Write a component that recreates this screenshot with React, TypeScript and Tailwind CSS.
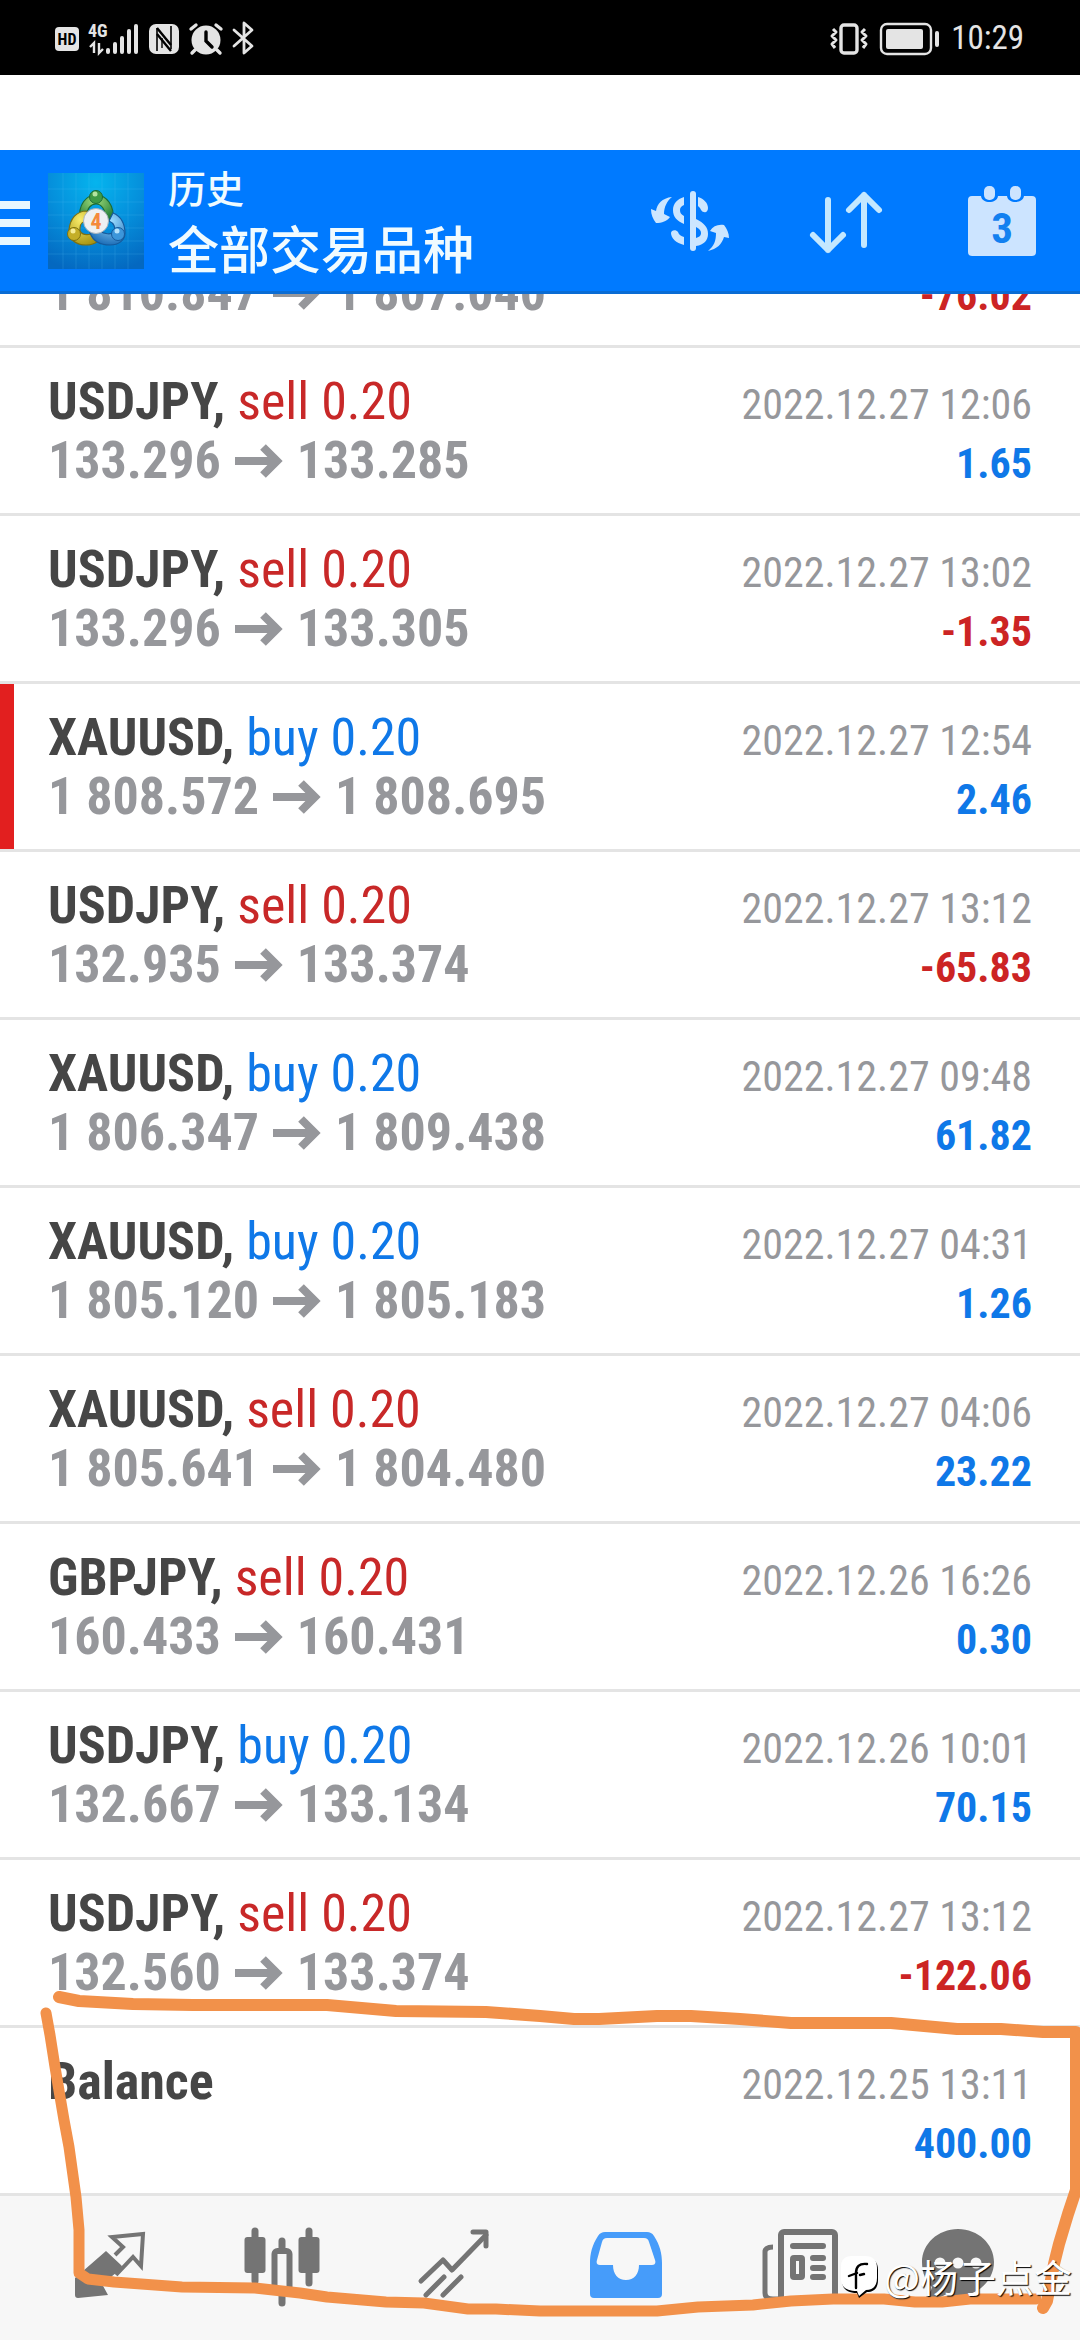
import React from 'react';
import clsx from 'clsx';

interface Deal {
  symbol?: string;
  side?: 'buy' | 'sell';
  volume?: string;
  open?: string;
  close?: string;
  time?: string;
  profit: string;
  marked?: boolean;
}

const deals: Deal[] = [
  { open: '1 810.847', close: '1 807.040', profit: '-76.02' },
  { symbol: 'USDJPY', side: 'sell', volume: '0.20', open: '133.296', close: '133.285', time: '2022.12.27 12:06', profit: '1.65' },
  { symbol: 'USDJPY', side: 'sell', volume: '0.20', open: '133.296', close: '133.305', time: '2022.12.27 13:02', profit: '-1.35' },
  { symbol: 'XAUUSD', side: 'buy', volume: '0.20', open: '1 808.572', close: '1 808.695', time: '2022.12.27 12:54', profit: '2.46', marked: true },
  { symbol: 'USDJPY', side: 'sell', volume: '0.20', open: '132.935', close: '133.374', time: '2022.12.27 13:12', profit: '-65.83' },
  { symbol: 'XAUUSD', side: 'buy', volume: '0.20', open: '1 806.347', close: '1 809.438', time: '2022.12.27 09:48', profit: '61.82' },
  { symbol: 'XAUUSD', side: 'buy', volume: '0.20', open: '1 805.120', close: '1 805.183', time: '2022.12.27 04:31', profit: '1.26' },
  { symbol: 'XAUUSD', side: 'sell', volume: '0.20', open: '1 805.641', close: '1 804.480', time: '2022.12.27 04:06', profit: '23.22' },
  { symbol: 'GBPJPY', side: 'sell', volume: '0.20', open: '160.433', close: '160.431', time: '2022.12.26 16:26', profit: '0.30' },
  { symbol: 'USDJPY', side: 'buy', volume: '0.20', open: '132.667', close: '133.134', time: '2022.12.26 10:01', profit: '70.15' },
  { symbol: 'USDJPY', side: 'sell', volume: '0.20', open: '132.560', close: '133.374', time: '2022.12.27 13:12', profit: '-122.06' },
  { symbol: 'Balance', time: '2022.12.25 13:11', profit: '400.00' },
];

const StatusBar = () => (
  <div className="flex h-[75px] shrink-0 items-center justify-between bg-black pr-[56px] pl-[54px] text-[#e4e4e4]">
    <div className="flex items-center gap-2">
      <svg width="26" height="36" viewBox="0 0 26 36">
        <rect x="1" y="7" width="24" height="24" rx="4" fill="currentColor" />
        <text x="13" y="25" textAnchor="middle" fontSize="16" fontWeight="700" fill="#000" className="font-['Roboto_Condensed',sans-serif]">HD</text>
      </svg>
      <svg width="52" height="36" viewBox="0 0 52 36" fill="currentColor">
        <text x="0" y="17" fontSize="18" fontWeight="700" className="font-['Roboto_Condensed',sans-serif]">4G</text>
        <path d="M2 27l4-4v10M11 23v10l4-4" fill="none" stroke="currentColor" strokeWidth="2.4" />
        <rect x="18" y="28" width="4" height="6" rx="2" />
        <rect x="25" y="22" width="4" height="12" rx="2" />
        <rect x="32" y="16" width="4" height="18" rx="2" />
        <rect x="39" y="9" width="4" height="25" rx="2" />
        <rect x="46" y="4" width="4" height="30" rx="2" />
      </svg>
      <svg width="32" height="36" viewBox="0 0 32 36">
        <rect x="1" y="4" width="30" height="30" rx="7" fill="currentColor" />
        <path d="M9 31V8M23 29V6" fill="none" stroke="#000" strokeWidth="1.6" />
        <path d="M9 8l14 17M9 14l14 17" fill="none" stroke="#000" strokeWidth="2.4" />
        <path d="M14 18v10" fill="none" stroke="#000" strokeWidth="1.4" />
      </svg>
      <svg width="36" height="36" viewBox="0 0 36 36">
        <circle cx="18" cy="20" r="14.5" fill="currentColor" />
        <path d="M3 9l5-4M33 9l-5-4M7 30l-3 3M29 30l3 3" stroke="currentColor" strokeWidth="3.4" strokeLinecap="round" />
        <path d="M18 12v9l6 6" fill="none" stroke="#000" strokeWidth="3.4" strokeLinecap="round" />
      </svg>
      <svg width="24" height="36" viewBox="0 0 24 36">
        <path d="M2 10l18 16-8 7V3l8 7L2 26" fill="none" stroke="currentColor" strokeWidth="2.8" strokeLinejoin="round" strokeLinecap="round" />
      </svg>
    </div>
    <div className="flex items-center gap-2.5">
      <svg width="40" height="36" viewBox="0 0 40 36" fill="none" stroke="currentColor">
        <rect x="12" y="5" width="16" height="28" rx="3" strokeWidth="3.4" />
        <path d="M4 9l3 3-4 4 4 4-4 4 3 4M36 9l-3 3 4 4-4 4 4 4-3 4" strokeWidth="3" strokeLinejoin="round" />
      </svg>
      <svg width="62" height="36" viewBox="0 0 62 36">
        <rect x="2" y="4" width="50" height="30" rx="6" fill="none" stroke="currentColor" strokeWidth="2.4" />
        <rect x="7" y="9" width="37" height="20" rx="2" fill="currentColor" />
        <rect x="56" y="11" width="4" height="16" rx="2" fill="currentColor" />
      </svg>
      <span className="font-['Roboto_Condensed',sans-serif] text-[33px]">10:29</span>
    </div>
  </div>
);

const AppLogo = () => (
  <svg width="96" height="96" viewBox="0 0 96 96" className="ml-[18px] shrink-0">
    <defs>
      <radialGradient id="sky" cx="50%" cy="10%" r="95%">
        <stop offset="0" stopColor="#05b4ee" />
        <stop offset="0.5" stopColor="#0590dc" />
        <stop offset="1" stopColor="#0468c0" />
      </radialGradient>
      <radialGradient id="green" cx="45%" cy="25%" r="75%">
        <stop offset="0" stopColor="#9fdc7c" />
        <stop offset="1" stopColor="#1f7a34" />
      </radialGradient>
      <radialGradient id="yellow" cx="40%" cy="25%" r="80%">
        <stop offset="0" stopColor="#f8ec6a" />
        <stop offset="1" stopColor="#a89412" />
      </radialGradient>
      <radialGradient id="blue" cx="60%" cy="25%" r="80%">
        <stop offset="0" stopColor="#9bdcff" />
        <stop offset="1" stopColor="#1668b4" />
      </radialGradient>
    </defs>
    <rect width="96" height="96" fill="url(#sky)" />
    <path d="M15 0v96M28 0v96M41 0v96M54 0v96M67 0v96M80 0v96M0 16h96M0 29h96M0 42h96M0 55h96M0 68h96M0 81h96" stroke="#5cc4f4" strokeOpacity="0.2" strokeWidth="1" />
    <path d="M32 46c-2-14 6-24 16-24s19 10 17 26l-8-2c1-10-4-15-9-15s-9 4-9 12z" fill="url(#green)" stroke="#1c6b35" strokeWidth="1.2" />
    <path d="M39 38c-11 0-17 8-18 19-1 10 8 15 17 15 5 0 8-1 11-3l-6-8c-7 2-12-1-11-6 0-4 3-7 8-7z" fill="url(#yellow)" stroke="#7c7012" strokeWidth="1.2" />
    <path d="M42 60c3 8 10 12 20 12 9 0 15-5 15-12 0-9-4-17-12-20l-4 8c5 2 7 7 5 11-3 3-10 2-14-1z" fill="url(#blue)" stroke="#165a9c" strokeWidth="1.2" />
    <circle cx="48" cy="24" r="6.5" fill="#3f9a45" stroke="#1c6b35" />
    <circle cx="26" cy="61" r="6.5" fill="#c4ae28" stroke="#7c7012" />
    <circle cx="70" cy="61" r="6.5" fill="#3c96da" stroke="#165a9c" />
    <circle cx="47" cy="21" r="2.5" fill="#b4e4a0" />
    <circle cx="25" cy="58" r="2.5" fill="#f6ec98" />
    <circle cx="69" cy="58" r="2.5" fill="#b4e2fc" />
    <circle cx="48" cy="48" r="12.5" fill="#eef0f2" stroke="#a9b4bd" />
    <text x="48" y="56" textAnchor="middle" fontSize="22" fontWeight="700" fill="#f58a3c" className="font-['Roboto_Condensed',sans-serif]">4</text>
  </svg>
);

const Header = () => (
  <header className="flex h-36 shrink-0 items-center border-b-3 border-[#0a6cd4] bg-[#007aff] text-[#f0fbff]">
    <button aria-label="Menu" className="flex w-[30px] shrink-0 flex-col gap-2.5 pt-1">
      <span className="h-2 bg-[#e8f7ff]" />
      <span className="h-2 bg-[#e8f7ff]" />
      <span className="h-2 bg-[#e8f7ff]" />
    </button>
    <AppLogo />
    <div className="ml-6 flex-1 pb-1 font-['Noto_Sans_CJK_SC',sans-serif] font-medium">
      <p className="text-[38px] leading-[56px]">历史</p>
      <h1 className="text-[51px] leading-[64px]">全部交易品种</h1>
    </div>
    <button aria-label="Currency" className="flex w-[156px] justify-center">
      <svg width="80" height="72" viewBox="0 0 80 72" fill="#cce6ff">
        <rect x="40" y="6" width="6" height="60" rx="3" />
        <path d="M34 12c-7 2-11 7-11 13 0 7 4 11 11 14v-8c-3-2-4-3-4-6 0-2 1-4 4-5z" />
        <path d="M48 12c6 2 10 6 10 11 0 3-2 5-4 4-2 0-3-2-4-4l-2-2z" />
        <path d="M46 34c8 4 12 8 12 15 0 6-4 11-12 12v-8c4-1 5-3 5-5s-1-4-5-6z" />
        <path d="M34 60c-8-2-13-7-13-12 0-3 5-4 7-1 1 3 3 4 6 5z" />
        <path d="M22 12c-10 1-15 7-16 14l-5-2c0 6 2 10 5 14 6 0 11-2 14-6l-6-3c0-7 3-13 8-17z" />
        <path d="M58 66c6-5 8-10 8-18l-6-2c3-5 8-7 14-6 3 4 5 8 5 13l-5-1c-2 7-7 12-16 14z" />
      </svg>
    </button>
    <button aria-label="Sort" className="flex w-[156px] justify-center">
      <svg width="80" height="72" viewBox="0 0 80 72" fill="none" stroke="#c4e8ff" strokeWidth="6" strokeLinecap="round" strokeLinejoin="round">
        <path d="M22 15v50M7 50l15 15 15-15M58 60V10M43 25l15-15 15 15" />
      </svg>
    </button>
    <button aria-label="Calendar" className="flex w-[156px] justify-center">
      <svg width="80" height="72" viewBox="0 0 80 72" fill="#cce4ff">
        <path d="M10 11h9c1 8 16 8 17 0h9c1 8 16 8 17 0h8a4 4 0 0 1 4 4v52a4 4 0 0 1-4 4H10a4 4 0 0 1-4-4V15a4 4 0 0 1 4-4z" />
        <rect x="22" y="1" width="11" height="14" rx="5" />
        <rect x="48" y="1" width="11" height="14" rx="5" />
        <text x="40" y="58" textAnchor="middle" fontSize="43" fontWeight="700" fill="#1280f0" className="font-['Roboto_Condensed',sans-serif]">3</text>
      </svg>
    </button>
  </header>
);

const ArrowRight = () => (
  <svg width="48" height="34" viewBox="0 0 48 34" className="mx-3.5 inline-block align-baseline" fill="none" stroke="currentColor" strokeWidth="8">
    <path d="M0 17h42M28 3l14 14-14 14" />
  </svg>
);

const DealRow: React.FC<{ deal: Deal }> = ({ deal }) => (
  <li
    className={clsx(
      "relative shrink-0 border-b-3 border-[#e4e4e4] px-12 pt-6 pb-[23px] font-['Roboto_Condensed',sans-serif] leading-[59px]",
      deal.marked && 'before:absolute before:inset-y-0 before:left-0 before:w-[14px] before:bg-[#e21f1f]'
    )}
  >
    <div className="flex h-[59px] items-baseline justify-between">
      <span className="text-[52px] font-bold text-[#464646]">
        {deal.symbol}
        {deal.side && (
          <>
            ,{' '}
            <span className={clsx('font-normal', deal.side === 'buy' ? 'text-[#0f78e8]' : 'text-[#c82828]')}>
              {deal.side} {deal.volume}
            </span>
          </>
        )}
      </span>
      <time className="text-[42px] leading-[50px] text-[#96979b]">{deal.time}</time>
    </div>
    <div className="flex h-[59px] items-baseline justify-between">
      <span className="text-[52px] font-bold text-[#96979b]">
        {deal.open ? (
          <>
            {deal.open}
            <ArrowRight />
            {deal.close}
          </>
        ) : (
          '\u00a0'
        )}
      </span>
      <span className={clsx('text-[42px] leading-[50px] font-bold', deal.profit.startsWith('-') ? 'text-[#cc2424]' : 'text-[#0f78e8]')}>
        {deal.profit}
      </span>
    </div>
  </li>
);

const tabs = [
  {
    label: 'Quotes',
    icon: (
      <>
        <path d="M44 31l15 14q2 2 0 4L40 64l6 11-30 3q-3 0-3-3V58z" fill="currentColor" />
        <path d="M53 35l8-8-11-10 31-3-2 32-8-9-17 18" fill="none" stroke="currentColor" strokeWidth="4" />
      </>
    ),
  },
  {
    label: 'Chart',
    icon: (
      <>
        <path d="M21 11v50M48 21v62M75 11v52" stroke="currentColor" strokeWidth="7" strokeLinecap="round" />
        <rect x="10.5" y="17" width="21" height="36" rx="3" fill="currentColor" />
        <rect x="64.5" y="17" width="21" height="36" rx="3" fill="currentColor" />
        <rect x="40.5" y="31" width="15" height="40" rx="3" fill="#f7f7f7" stroke="currentColor" strokeWidth="6" />
      </>
    ),
  },
  {
    label: 'Trade',
    icon: (
      <g fill="none" stroke="currentColor" strokeWidth="5" strokeLinecap="round" strokeLinejoin="round">
        <path d="M15 61l22-21 9 10 34-35" />
        <path d="M67 12h13v14" />
        <path d="M20 75l18-18M37 75l18-18" />
      </g>
    ),
  },
  {
    label: 'History',
    icon: (
      <path
        fillRule="evenodd"
        fill="currentColor"
        d="M27 12h42c3 0 5 1 7 4 6 9 8 18 8 27v31a4 4 0 0 1-4 4H16a4 4 0 0 1-4-4V43c0-9 2-18 8-27 2-3 4-4 7-4zm2 6c-3 0-4 1-5 4l-5 18c-1 3 0 5 3 5h13c0 9 5 15 13 15s13-6 13-15h13c3 0 4-2 3-5l-6-18c-1-3-2-4-5-4z"
      />
    ),
  },
  {
    label: 'News',
    icon: (
      <g transform="translate(2 0)">
        <rect x="29" y="12" width="54" height="68" rx="3" fill="#f7f7f7" stroke="currentColor" strokeWidth="6" />
        <path d="M21 27q-8 0-8 5v41q0 6 8 6h10" fill="none" stroke="currentColor" strokeWidth="5" />
        <path d="M41 26h30M61 38h10M61 48h10M61 57h10" stroke="currentColor" strokeWidth="6" strokeLinecap="round" />
        <rect x="41" y="38" width="9" height="19" rx="1" fill="none" stroke="currentColor" strokeWidth="6" />
      </g>
    ),
  },
  {
    label: 'Messages',
    icon: (
      <>
        <path d="M36 9c20 0 36 15 36 33S56 76 36 76c-5 0-8 0-11-2-6 3-13 6-24 6 5-5 8-8 9-13C4 62 0 53 0 42 0 24 16 9 36 9z" fill="currentColor" />
        <circle cx="18" cy="43" r="5.5" fill="#f7f7f7" />
        <circle cx="36" cy="43" r="5.5" fill="#f7f7f7" />
        <circle cx="54" cy="43" r="5.5" fill="#f7f7f7" />
      </>
    ),
  },
];

const TabBar = () => (
  <nav className="flex h-36 shrink-0 justify-between bg-[#f7f7f7] px-6 pt-6">
    {tabs.map(tab => (
      <button
        key={tab.label}
        aria-label={tab.label}
        className={clsx('flex flex-1 items-start justify-center', tab.label === 'History' ? 'text-[#469cfa]' : 'text-[#747474]')}
      >
        <svg width="96" height="96" viewBox="0 0 96 96">{tab.icon}</svg>
      </button>
    ))}
  </nav>
);

// Hand-drawn marker around the balance row
const Marker = () => (
  <svg viewBox="0 0 1080 360" className="pointer-events-none absolute inset-x-0 bottom-0 w-full" fill="none" stroke="#f2914a" strokeLinecap="round" strokeLinejoin="round">
    <path strokeWidth="12" d="M59 17l20 4 54 3 60 1h134l69 6 90 1 54 4 34 3h25l58-3 34 0 49 3 51 4h66l34 0 66 6h44l42 3h33v158l-8 24-9 30-5 20-7 37-4 7" />
    <path strokeWidth="11" d="M46 33l4 22 5 32 9 53 5 27 7 50 3 33v43l9 6 26 3 68 5 73 1 45 5 27 4 59 5 38 1 44 6h28l44 2h117l41-4 55-2 38-4 42-2 51 0 31 3h27l28-3h66" />
  </svg>
);

const Watermark = () => (
  <div className="pointer-events-none absolute right-2 bottom-9 flex items-center gap-1 text-white">
    <svg width="40" height="48" viewBox="0 0 40 48">
      <path d="M13 6h13c8 0 12 4 12 12v10c0 8-4 12-11 12l-8 6-2-5C7 41 2 37 2 28V17C2 10 5 6 13 6z" fill="#000" />
      <path d="M12 4h13c8 0 12 4 12 12v10c0 8-4 12-11 12l-7 6-2-5C6 39 1 35 1 26V15C1 8 4 4 12 4z" fill="#fff" />
      <path d="M27 12c-8-1-11 3-11 9v15M9 24l8-3M20 23l4-1" fill="none" stroke="#000" strokeWidth="2.4" strokeLinecap="round" />
    </svg>
    <span className="font-['Noto_Sans_CJK_SC',sans-serif] text-[38px] leading-[56px] [text-shadow:1px_1px_1px_#000]">@杨子点金</span>
  </div>
);

export default function App() {
  return (
    <div className="relative flex h-screen flex-col overflow-hidden bg-white">
      <StatusBar />
      <div className="h-[75px] shrink-0" />
      <Header />
      <ul className="flex min-h-0 flex-1 flex-col justify-end overflow-hidden">
        {deals.map((deal, index) => (
          <DealRow key={index} deal={deal} />
        ))}
      </ul>
      <TabBar />
      <Marker />
      <Watermark />
    </div>
  );
}
